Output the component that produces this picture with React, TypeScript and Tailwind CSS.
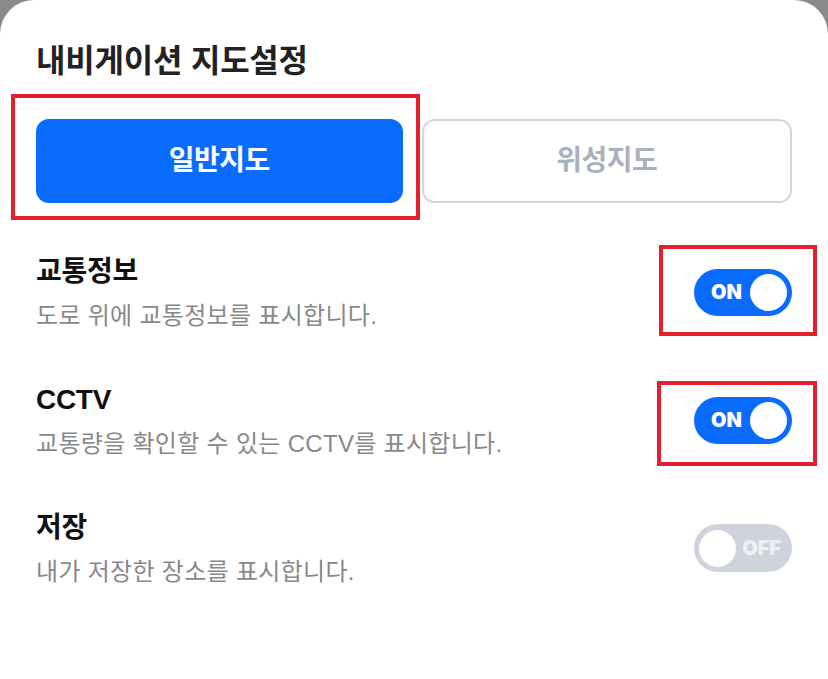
import React from "react";

const KR = { fontFamily: '"Liberation Sans", "Noto Sans CJK KR", "Noto Sans", sans-serif' };

function Toggle({ on }: { on: boolean }) {
  if (on) {
    return (
      <div className="flex h-[47px] w-[98px] items-center justify-between rounded-full bg-[#0a6cff] pl-[17px] pr-[5px]">
        <span className="text-[20px] font-black leading-none text-white" style={{ fontFamily: '"Inter", "Noto Sans", sans-serif' }}>ON</span>
        <span className="h-[37px] w-[37px] rounded-full bg-white" />
      </div>
    );
  }
  return (
    <div className="flex h-[48px] w-[98px] items-center justify-between rounded-full bg-[#cfd4dc] pl-[5px] pr-[11px]">
      <span className="h-[37px] w-[37px] rounded-full bg-white" />
      <span className="text-[20px] font-black leading-none text-[#eef0f3]" style={{ fontFamily: '"Inter", "Noto Sans", sans-serif' }}>OFF</span>
    </div>
  );
}

function Row({ title, desc, on, box }: { title: string; desc: string; on: boolean; box?: string }) {
  return (
    <div className="flex items-center justify-between">
      <div className="flex flex-col">
        <div className="mt-[2px] text-[28px] font-bold leading-[36px] tracking-[-0.3px] text-[#111111]">{title}</div>
        <div className="mt-[10px] text-[24px] leading-[32px] tracking-[0.3px] text-[#888888]">{desc}</div>
      </div>
      <div className="relative">
        <Toggle on={on} />
        {box && <div className={`pointer-events-none absolute border-[4px] border-[#e3202b] ${box}`} />}
      </div>
    </div>
  );
}

export default function App() {
  return (
    <div className="h-[679px] w-[828px] bg-[#8a8a8a]" style={KR}>
      <div className="flex h-full flex-col rounded-t-[34px] bg-white px-[36px] pt-[41px]">
        <h1 className="text-[32px] font-bold leading-[40px] tracking-[-0.2px] text-[#222222]">내비게이션 지도설정</h1>
        <div className="mt-[38px] flex gap-[19px]">
          <div className="relative flex-1">
            <button className="flex h-[84px] w-full items-center justify-center rounded-[13px] bg-[#0a6cff] text-[28px] font-bold tracking-[-0.5px] text-white">
              일반지도
            </button>
            <div className="pointer-events-none absolute -left-[25px] -top-[25px] -right-[17px] -bottom-[17px] border-[4px] border-[#e3202b]" />
          </div>
          <button className="flex h-[84px] flex-1 items-center justify-center rounded-[13px] border-2 border-[#d1d6de] bg-white text-[28px] font-bold tracking-[-0.5px] text-[#aab1bd]">
            위성지도
          </button>
        </div>
        <div className="mt-[49px] flex flex-col gap-[48px]">
          <Row title="교통정보" desc="도로 위에 교통정보를 표시합니다." on box="-left-[35px] -top-[24px] -right-[25px] -bottom-[20px]" />
          <Row title="CCTV" desc="교통량을 확인할 수 있는 CCTV를 표시합니다." on box="-left-[37px] -top-[16px] -right-[25px] -bottom-[22px]" />
          <Row title="저장" desc="내가 저장한 장소를 표시합니다." on={false} />
        </div>
      </div>
    </div>
  );
}
